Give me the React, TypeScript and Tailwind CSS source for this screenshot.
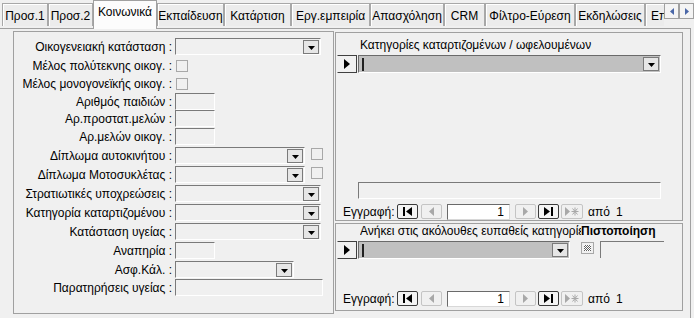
import type { ReactNode } from 'react'

const sunken =
  'border border-t-[#7a7a7a] border-l-[#7a7a7a] border-b-white border-r-white'

const tabs = [
  { label: 'Προσ.1', w: 'w-[46px]' },
  { label: 'Προσ.2', w: 'w-[45px]' },
  { label: 'Κοινωνικά', w: 'w-[64px]', active: true },
  { label: 'Εκπαίδευση', w: 'w-[67px]' },
  { label: 'Κατάρτιση', w: 'w-[67px]' },
  { label: 'Εργ.εμπειρία', w: 'w-[79px]' },
  { label: 'Απασχόληση', w: 'w-[74px]' },
  { label: 'CRM', w: 'w-[41px]' },
  { label: 'Φίλτρο-Εύρεση', w: 'w-[90px]' },
  { label: 'Εκδηλώσεις', w: 'w-[70px]' },
  { label: 'Επικοινωνία', w: 'w-[70px] !justify-start pl-[5px]' },
]

function DropBtn() {
  return (
    <div className="flex h-[14px] w-[16px] shrink-0 items-end justify-center border border-[#7a7a7a] bg-[#e6e6e6] pb-[3px]">
      <svg width="7" height="4" viewBox="0 0 7 4">
        <path d="M0 0h7L3.5 4z" fill="#000" />
      </svg>
    </div>
  )
}

function Combo({ w }: { w: string }) {
  return (
    <div className={`${w} flex h-[17px] shrink-0 items-start justify-end pr-px pt-px ${sunken}`}>
      <DropBtn />
    </div>
  )
}

function Text({ w }: { w: string }) {
  return <div className={`${w} h-[17px] shrink-0 ${sunken}`} />
}

function Check({ cls = '' }: { cls?: string }) {
  return <div className={`h-[12px] w-[12px] shrink-0 border border-[#a8a8a8] ${cls}`} />
}

function Row({ label, mt, children }: { label: string; mt: string; children: ReactNode }) {
  return (
    <div className={`flex h-[17px] items-center ${mt}`}>
      <div className="w-[161px] shrink-0 whitespace-nowrap pr-[3px] text-right">{label}</div>
      {children}
    </div>
  )
}

function Selector() {
  return (
    <div className="ml-px flex h-[18px] w-[20px] shrink-0 items-center justify-center border border-[#404040] border-l-[#f0f0f0] bg-[#f0f0f0]">
      <svg width="6" height="10" viewBox="0 0 6 10">
        <path d="M0 0l6 5-6 5z" fill="#000" />
      </svg>
    </div>
  )
}

function GrayCombo({ w }: { w: string }) {
  return (
    <div
      className={`${w} ml-px flex h-[18px] shrink-0 items-center border border-t-[#6a6a6a] border-l-[#6a6a6a] border-b-white border-r-white bg-[#c0c0c0] pr-px`}
    >
      <div className="ml-[3px] h-[13px] w-[2px] bg-[#202020]" />
      <div className="flex-1" />
      <DropBtn />
    </div>
  )
}

function NavBtn({ on, w = 'w-[21px]', ml, children }: { on?: boolean; w?: string; ml: string; children: ReactNode }) {
  return (
    <div
      className={`${w} ${ml} flex h-[15px] shrink-0 items-center justify-center rounded-[2px] border ${
        on ? 'border-[#3a3a3a] bg-[#f4f4f4]' : 'border-[#c4c4c4] bg-[#f0f0f0]'
      }`}
    >
      {children}
    </div>
  )
}

function Nav({ mt }: { mt: string }) {
  const dim = '#a8a8a8'
  return (
    <div className={`flex h-[15px] items-center ${mt}`}>
      <span className="ml-[7px] w-[54px] shrink-0 whitespace-nowrap">Εγγραφή:</span>
      <NavBtn on ml="ml-0">
        <svg width="9" height="9" viewBox="0 0 9 9">
          <rect x="0" y="0" width="2" height="9" fill="#000" />
          <path d="M9 0v9L3 4.5z" fill="#000" />
        </svg>
      </NavBtn>
      <NavBtn ml="ml-[3px]">
        <svg width="5" height="9" viewBox="0 0 5 9">
          <path d="M5 0v9L0 4.5z" fill={dim} />
        </svg>
      </NavBtn>
      <div className="ml-[5px] flex h-[16px] w-[63px] shrink-0 items-center justify-end border border-t-[#6a6a6a] border-l-[#6a6a6a] border-b-[#d8d8d8] border-r-[#d8d8d8] bg-white pr-[5px]">
        1
      </div>
      <NavBtn ml="ml-[5px]">
        <svg width="5" height="9" viewBox="0 0 5 9">
          <path d="M0 0v9L5 4.5z" fill={dim} />
        </svg>
      </NavBtn>
      <NavBtn on ml="ml-[2px]">
        <svg width="9" height="9" viewBox="0 0 9 9">
          <path d="M0 0v9L6 4.5z" fill="#000" />
          <rect x="7" y="0" width="2" height="9" fill="#000" />
        </svg>
      </NavBtn>
      <NavBtn ml="ml-[2px]" w="w-[22px]">
        <svg width="14" height="9" viewBox="0 0 14 9">
          <path d="M0 0v9L5 4.5z" fill={dim} />
          <path d="M10 0.5v8M6.5 4.5h7M7.5 1.5l5 6M12.5 1.5l-5 6" stroke={dim} strokeWidth="1" />
        </svg>
      </NavBtn>
      <span className="ml-[5px] whitespace-nowrap">από</span>
      <span className="ml-[6px]">1</span>
    </div>
  )
}

export default function App() {
  return (
    <div className="relative h-[318px] w-[694px] overflow-hidden bg-[#f0f0f0] font-['Liberation_Sans',Arial,sans-serif] text-[12px] leading-[14px] text-black">
      {/* tab strip */}
      <div className="flex h-[28px] items-start">
        <div className="flex w-[670px] items-start overflow-hidden pl-[2px]">
          {tabs.map((t) =>
            t.active ? (
              <div
                key={t.label}
                className={`${t.w} relative z-10 flex h-[29px] shrink-0 justify-center border border-b-0 border-[#a0a0a0] bg-[#fcfcfc] pt-[4px]`}
              >
                {t.label}
              </div>
            ) : (
              <div
                key={t.label}
                className={`${t.w} mt-[3px] flex h-[23px] shrink-0 justify-center whitespace-nowrap border border-b-0 border-[#a8a8a8] bg-[#ececec] pt-[5px] shadow-[inset_1px_1px_0_#fff]`}
              >
                {t.label}
              </div>
            ),
          )}
        </div>
        <div className="mt-[3px] flex">
          <div className="flex h-[16px] w-[15px] items-center justify-center border border-[#a0a0a0] bg-[#f4f4f4]">
            <svg width="4" height="7" viewBox="0 0 4 7">
              <path d="M4 0v7L0 3.5z" fill="#4a67a8" />
            </svg>
          </div>
          <div className="flex h-[16px] w-[15px] items-center justify-center border border-[#a0a0a0] bg-[#f4f4f4]">
            <svg width="4" height="7" viewBox="0 0 4 7">
              <path d="M0 0v7L4 3.5z" fill="#4a67a8" />
            </svg>
          </div>
        </div>
      </div>

      {/* page */}
      <div className="flex h-[290px] w-[691px] items-start border-t border-r border-[#a0a0a0]">
        {/* left panel */}
        <div className="ml-[13px] mt-[2px] h-[283px] w-[321px] shrink-0 border border-[#a0a0a0]">
          <Row label="Οικογενειακή κατάσταση :" mt="mt-[6px]">
            <Combo w="w-[146px]" />
          </Row>
          <Row label="Μέλος πολύτεκνης οικογ. :" mt="mt-[2px]">
            <Check cls="ml-px" />
          </Row>
          <Row label="Μέλος μονογονεϊκής οικογ. :" mt="mt-px">
            <Check cls="ml-px" />
          </Row>
          <Row label="Αριθμός παιδιών :" mt="mt-px">
            <Text w="w-[40px]" />
          </Row>
          <Row label="Αρ.προστατ.μελών :" mt="mt-0">
            <Text w="w-[40px]" />
          </Row>
          <Row label="Αρ.μελών οικογ. :" mt="mt-px">
            <Text w="w-[40px]" />
          </Row>
          <Row label="Δίπλωμα αυτοκινήτου :" mt="mt-[2px]">
            <Combo w="w-[130px]" />
            <Check cls="ml-[6px] self-start mt-px" />
          </Row>
          <Row label="Δίπλωμα Μοτοσυκλέτας :" mt="mt-[2px]">
            <Combo w="w-[130px]" />
            <Check cls="ml-[6px] self-start mt-px" />
          </Row>
          <Row label="Στρατιωτικές υποχρεώσεις :" mt="mt-[2px]">
            <Combo w="w-[146px]" />
          </Row>
          <Row label="Κατηγορία καταρτιζομένου :" mt="mt-[2px]">
            <Combo w="w-[146px]" />
          </Row>
          <Row label="Κατάσταση υγείας :" mt="mt-[2px]">
            <Combo w="w-[146px]" />
          </Row>
          <Row label="Αναπηρία :" mt="mt-[2px]">
            <Text w="w-[40px]" />
          </Row>
          <Row label="Ασφ.Κάλ. :" mt="mt-[2px]">
            <Combo w="w-[119px]" />
          </Row>
          <Row label="Παρατηρήσεις υγείας :" mt="mt-px">
            <Text w="w-[148px]" />
          </Row>
        </div>

        {/* right column */}
        <div className="ml-px mt-[3px] flex w-[348px] shrink-0 flex-col">
          <div className="flex h-[189px] flex-col border border-[#a0a0a0]">
            <div className="ml-[24px] mt-[6px] h-[13px] whitespace-nowrap leading-[13px]">
              Κατηγορίες καταρτιζομένων / ωφελουμένων
            </div>
            <div className="mt-[3px] flex h-[18px] items-center">
              <Selector />
              <GrayCombo w="w-[303px]" />
            </div>
            <div className={`ml-[22px] mt-[109px] h-[17px] w-[303px] ${sunken}`} />
            <Nav mt="mt-[5px]" />
          </div>

          <div className="mt-[2px] flex h-[88px] flex-col border border-[#a0a0a0]">
            <div className="ml-[24px] mt-px flex h-[13px] whitespace-nowrap leading-[13px]">
              <div className="w-[221px] overflow-hidden">Ανήκει στις ακόλουθες ευπαθείς κατηγορίες</div>
              <div className="font-bold">Πιστοποίηση</div>
            </div>
            <div className="mt-[3px] flex h-[18px] items-start">
              <Selector />
              <GrayCombo w="w-[212px]" />
              <div className="ml-[11px] mt-px h-[12px] w-[13px] shrink-0 border border-[#a8a8a8] bg-[#f0f0f0] p-[2px]">
                <div className="h-full w-full bg-[repeating-conic-gradient(#606060_0%_25%,#ffffff_0%_50%)] bg-[length:2px_2px]" />
              </div>
              <div className="ml-[6px] h-[17px] w-[64px] shrink-0 border-t border-l border-[#7a7a7a]" />
            </div>
            <Nav mt="mt-[32px]" />
          </div>
        </div>
      </div>
    </div>
  )
}
